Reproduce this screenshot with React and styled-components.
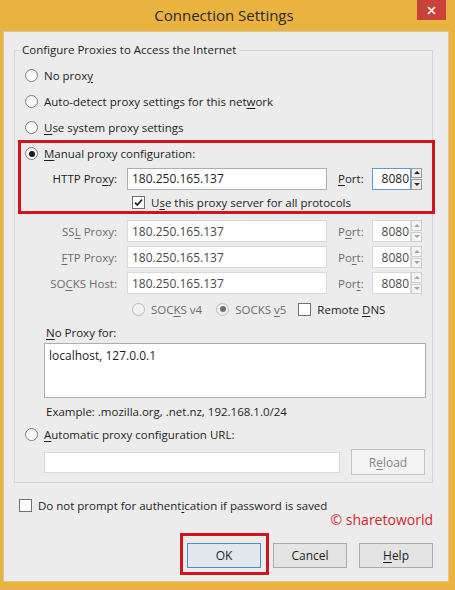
import styled, { createGlobalStyle } from 'styled-components';

const GlobalStyle = createGlobalStyle`
  html, body {
    margin: 0;
    padding: 0;
    background: #eab23f;
  }
  body {
    font-family: "Segoe UI", "Open Sans", "Noto Sans", sans-serif;
    font-size: 11.5px;
    color: #1e1e1e;
  }
`;

const Window = styled.div`
  width: 455px;
  height: 590px;
  box-sizing: border-box;
  background: #eab23f;
  display: flex;
  flex-direction: column;
  padding: 0 6px 8px 3px;
`;

const TitleBar = styled.div`
  height: 31px;
  display: grid;
  grid-template-columns: 1fr auto 1fr;
  align-items: start;
`;

const Title = styled.div`
  grid-column: 2;
  font-size: 15px;
  line-height: 31px;
  color: #2b2b2b;
  margin-left: -4px;
`;

const CloseButton = styled.div`
  grid-column: 3;
  justify-self: end;
  width: 29px;
  height: 20px;
  margin-right: 3px;
  background: #c8413b;
  display: flex;
  align-items: center;
  justify-content: center;
`;

const Client = styled.div`
  flex: 1;
  background: #ececec;
  border: 1px solid #d9c79b;
  display: flex;
  flex-direction: column;
  padding: 10px 15px 0 10px;
`;

const Group = styled.fieldset`
  margin: 0;
  padding: 0 10px 7px 10px;
  border: 1px solid #d4d4d4;
  min-width: 0;
`;

const Legend = styled.legend`
  padding: 0 3px 0 2px;
  margin-left: -5px;
  line-height: 16px;
  color: #1e1e1e;
`;

const Row = styled.div`
  display: flex;
  align-items: center;
  height: ${p => p.$h || 26}px;
  margin-top: ${p => p.$mt || 0}px;
  margin-left: ${p => p.$ml || 0}px;
  gap: ${p => p.$gap || 0}px;
`;

const Highlight = styled.div`
  border: 3px solid #d2141f;
  margin: 0 -13px 0 -7px;
  padding: 0 10px 0 4px;
`;

const RadioCircle = styled.span`
  width: 13px;
  height: 13px;
  box-sizing: border-box;
  border-radius: 50%;
  border: 1px solid ${p => (p.$disabled ? '#bdbdbd' : '#7d7d7d')};
  background: ${p => (p.$disabled ? '#f1f1f1' : 'linear-gradient(#f4f4f4, #ffffff)')};
  display: inline-flex;
  align-items: center;
  justify-content: center;
  flex: none;
  margin-right: 6px;

  &::after {
    content: '';
    display: ${p => (p.$on ? 'block' : 'none')};
    width: 6px;
    height: 6px;
    border-radius: 50%;
    background: ${p => (p.$disabled ? '#6f6f6f' : '#1a1a1a')};
  }
`;

const Box = styled.span`
  width: 13px;
  height: 13px;
  box-sizing: border-box;
  border: 1px solid #707070;
  background: #fff;
  display: inline-flex;
  align-items: center;
  justify-content: center;
  flex: none;
  margin-right: 6px;
`;

const Spacer = styled.span`
  width: ${p => p.$w}px;
  flex: none;
`;

const Text = styled.span`
  color: ${p => (p.$muted ? '#6d6d6d' : '#1e1e1e')};
  white-space: nowrap;
`;

const Key = styled.span`
  text-decoration: underline;
  text-underline-offset: 2px;
`;

const FieldLabel = styled.span`
  width: 92px;
  flex: none;
  margin-right: 10px;
  text-align: right;
  color: ${p => (p.$muted ? '#6d6d6d' : '#1e1e1e')};
  white-space: nowrap;
`;

const Input = styled.div`
  width: ${p => p.$w || 200}px;
  height: ${p => p.$h || 22}px;
  flex: none;
  box-sizing: border-box;
  background: #fff;
  border: 1px solid ${p => (p.$disabled ? '#d9d9d9' : '#abadb3')};
  color: ${p => (p.$disabled ? '#4a4a4a' : '#1e1e1e')};
  padding: ${p => (p.$multi ? '3px 4px' : '0 4px')};
  display: flex;
  align-items: ${p => (p.$multi ? 'flex-start' : 'center')};
  font-size: 12px;
`;

const PortLabel = styled.span`
  width: 34px;
  flex: none;
  margin-left: 11px;
  color: ${p => (p.$muted ? '#6d6d6d' : '#1e1e1e')};
`;

const PortField = styled.div`
  display: flex;
  flex: none;
  width: 50px;
  height: 22px;
`;

const PortInput = styled.div`
  width: 39px;
  box-sizing: border-box;
  border: 1px solid ${p => (p.$focus ? '#5b9bd5' : '#d9d9d9')};
  background: #fff;
  color: ${p => (p.$disabled ? '#4a4a4a' : '#1e1e1e')};
  font-size: 12px;
  display: flex;
  align-items: center;
  justify-content: flex-end;
  padding-right: 1px;
`;

const Spinner = styled.div`
  width: 11px;
  display: flex;
  flex-direction: column;
  gap: 1px;
`;

const SpinArrow = styled.div`
  flex: 1;
  border: 1px solid ${p => (p.$disabled ? '#cfcfcf' : '#9a9a9a')};
  background: ${p => (p.$disabled ? '#f4f4f4' : '#ececec')};
  display: flex;
  align-items: center;
  justify-content: center;

  &::after {
    content: '';
    border-left: 3px solid transparent;
    border-right: 3px solid transparent;
    ${p => (p.$down ? 'border-top' : 'border-bottom')}: 3px solid ${p => (p.$disabled ? '#a5a5a5' : '#2a2a2a')};
  }
`;

const Button = styled.div`
  width: ${p => p.$w || 74}px;
  height: ${p => p.$h || 25}px;
  box-sizing: border-box;
  border: 1px solid ${p => (p.$default ? '#4a8fd0' : p.$disabled ? '#c4c4c4' : '#acacac')};
  background: ${p => (p.$default ? '#e3e8ee' : p.$disabled ? '#f3f3f3' : '#e4e4e4')};
  color: ${p => (p.$disabled ? '#858585' : '#1e1e1e')};
  display: flex;
  align-items: center;
  justify-content: center;
  font-size: 12px;
  flex: none;
`;

const OkHighlight = styled.div`
  border: 3px solid #d2141f;
  padding: 7px 5px 4px 4px;
  margin: -10px -8px -7px -7px;
`;

const Footer = styled.div`
  display: flex;
  flex-direction: column;
  padding-left: 5px;
`;

const Watermark = styled.div`
  align-self: flex-end;
  color: #d2262b;
  font-size: 14px;
  line-height: 16px;
  margin-top: -2px;
`;

const ButtonRow = styled.div`
  display: flex;
  justify-content: flex-end;
  gap: 12px;
  margin-top: 15px;
`;

const Check = () => (
  <svg width="9" height="9" viewBox="0 0 9 9">
    <path d="M1 4.6 L3.4 7 L8 1.4" fill="none" stroke="#1a1a1a" strokeWidth="1.6" />
  </svg>
);

function Radio({ on, disabled, children }) {
  return (
    <>
      <RadioCircle $on={on} $disabled={disabled} />
      <Text $muted={disabled}>{children}</Text>
    </>
  );
}

function Port({ focus, disabled }) {
  return (
    <PortField>
      <PortInput $focus={focus} $disabled={disabled}>8080</PortInput>
      <Spinner>
        <SpinArrow $disabled={disabled} />
        <SpinArrow $down $disabled={disabled} />
      </Spinner>
    </PortField>
  );
}

const proxies = [
  { label: <>SS<Key>L</Key> Proxy:</>, port: <>P<Key>o</Key>rt:</> },
  { label: <><Key>F</Key>TP Proxy:</>, port: <>Po<Key>r</Key>t:</> },
  { label: <>SO<Key>C</Key>KS Host:</>, port: <>Por<Key>t</Key>:</> },
];

export default function App() {
  return (
    <>
      <GlobalStyle />
      <Window>
        <TitleBar>
          <Title>Connection Settings</Title>
          <CloseButton>
            <svg width="9" height="9" viewBox="0 0 9 9">
              <path d="M1 1 L8 8 M8 1 L1 8" stroke="#fff" strokeWidth="1.7" />
            </svg>
          </CloseButton>
        </TitleBar>

        <Client>
          <Group>
            <Legend>Configure Proxies to Access the Internet</Legend>
            <Row $mt={4}>
              <Radio>No prox<Key>y</Key></Radio>
            </Row>
            <Row>
              <Radio>Auto-detect proxy settings for this net<Key>w</Key>ork</Radio>
            </Row>
            <Row>
              <Radio><Key>U</Key>se system proxy settings</Radio>
            </Row>

            <Highlight>
              <Row $h={21}>
                <Radio on><Key>M</Key>anual proxy configuration:</Radio>
              </Row>
              <Row $h={23} $mt={3}>
                <FieldLabel>HTTP Pro<Key>x</Key>y:</FieldLabel>
                <Input>180.250.165.137</Input>
                <PortLabel><Key>P</Key>ort:</PortLabel>
                <Port focus />
              </Row>
              <Row $h={17} $mt={4} $ml={107}>
                <Box><Check /></Box>
                <Text>U<Key>s</Key>e this proxy server for all protocols</Text>
              </Row>
            </Highlight>

            {proxies.map((p, i) => (
              <Row key={i} $h={22} $mt={i === 0 ? 6 : 4}>
                <FieldLabel $muted>{p.label}</FieldLabel>
                <Input $disabled>180.250.165.137</Input>
                <PortLabel $muted>{p.port}</PortLabel>
                <Port disabled />
              </Row>
            ))}

            <Row $h={18} $mt={6} $ml={107}>
              <Radio disabled>SOC<Key>K</Key>S v4</Radio>
              <Spacer $w={14} />
              <Radio disabled on>SOCKS <Key>v</Key>5</Radio>
              <Spacer $w={12} />
              <Box />
              <Text>Remote <Key>D</Key>NS</Text>
            </Row>

            <Row $h={16} $mt={6} $ml={21}>
              <Text><Key>N</Key>o Proxy for:</Text>
            </Row>
            <Row $h={55} $mt={3} $ml={19}>
              <Input $w={382} $h={55} $multi>localhost, 127.0.0.1</Input>
            </Row>
            <Row $h={16} $mt={5} $ml={21}>
              <Text>Example: .mozilla.org, .net.nz, 192.168.1.0/24</Text>
            </Row>
            <Row $h={22} $mt={4}>
              <Radio><Key>A</Key>utomatic proxy configuration URL:</Radio>
            </Row>
            <Row $h={26} $mt={4} $ml={19} $gap={11}>
              <Input $w={296} $h={21} $disabled />
              <Button $w={74} $h={26} $disabled>R<Key>e</Key>load</Button>
            </Row>
          </Group>

          <Footer>
            <Row $h={17} $mt={14}>
              <Box />
              <Text>Do not prompt for authent<Key>i</Key>cation if password is saved</Text>
            </Row>
            <Watermark>© sharetoworld</Watermark>
            <ButtonRow>
              <OkHighlight>
                <Button $default>OK</Button>
              </OkHighlight>
              <Button>Cancel</Button>
              <Button><Key>H</Key>elp</Button>
            </ButtonRow>
          </Footer>
        </Client>
      </Window>
    </>
  );
}
